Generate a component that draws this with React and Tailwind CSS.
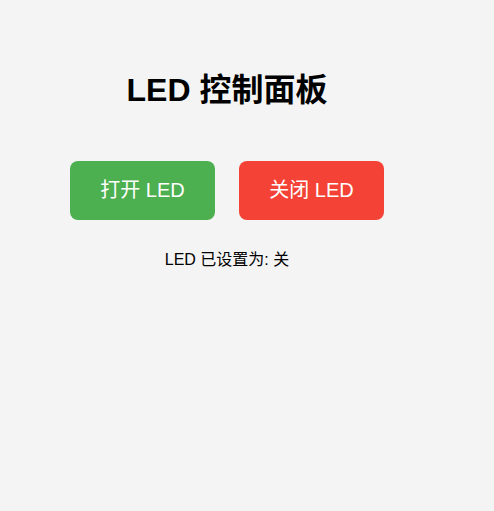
export default function App() {
  return (
    <div
      className="min-h-[511px] bg-[#f4f4f4] text-black"
      style={{ fontFamily: '"Liberation Sans", "Noto Sans CJK SC", sans-serif' }}
    >
      <div className="w-[454px] flex flex-col items-center pt-[67px]">
        <h1 className="text-[32px] font-bold leading-[46px] m-0">LED 控制面板</h1>
        <div className="flex gap-[24px] mt-[48px]">
          <button className="bg-[#4caf50] text-white text-[20px] leading-[29px] w-[145px] py-[15px] rounded-[8px] border-0">
            打开 LED
          </button>
          <button className="bg-[#f44336] text-white text-[20px] leading-[29px] w-[145px] py-[15px] rounded-[8px] border-0">
            关闭 LED
          </button>
        </div>
        <p className="text-[16px] leading-[23px] mt-[28px]">LED 已设置为: 关</p>
      </div>
    </div>
  );
}
